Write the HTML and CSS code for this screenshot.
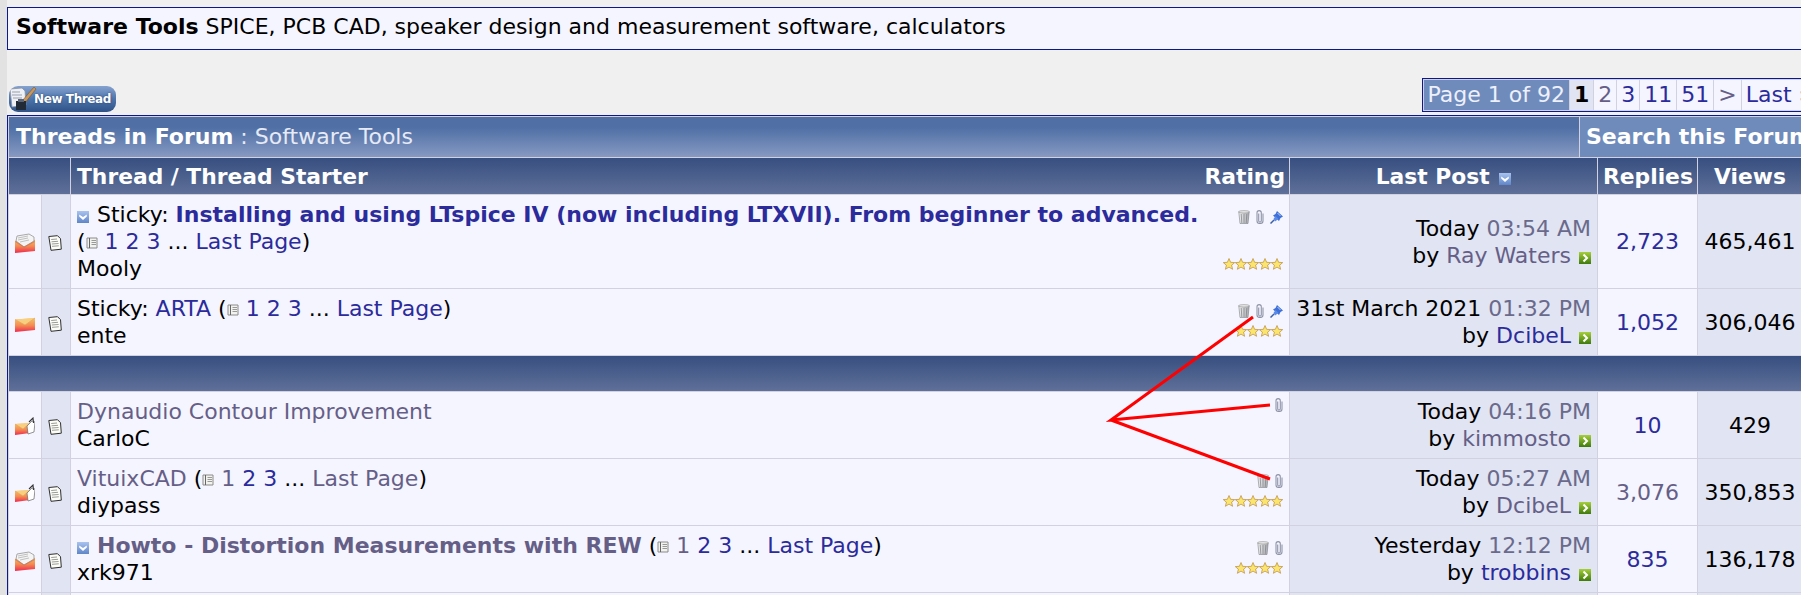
FILE: index.html
```html
<!DOCTYPE html>
<html lang="en">
<head>
<meta charset="utf-8">
<title>Software Tools</title>
<link rel="stylesheet" href="styles.css">
</head>
<body>
<svg class="defs" width="0" height="0" aria-hidden="true">
  <defs>
    <linearGradient id="env" x1="0" y1="0" x2="0" y2="1"><stop offset="0" stop-color="#f4c46a"/><stop offset=".55" stop-color="#f48a50"/><stop offset="1" stop-color="#ee2a50"/></linearGradient>
    <linearGradient id="chk" x1="0" y1="0" x2="0" y2="1"><stop offset="0" stop-color="#a9c3ee"/><stop offset="1" stop-color="#5f86c8"/></linearGradient>
    <linearGradient id="grn" x1="0" y1="0" x2="0" y2="1"><stop offset="0" stop-color="#a6cf3a"/><stop offset="1" stop-color="#3f7a0c"/></linearGradient>
    <linearGradient id="trs" x1="0" y1="0" x2="1" y2="0"><stop offset="0" stop-color="#f2f2f2"/><stop offset="1" stop-color="#a5a8ae"/></linearGradient>
    <symbol id="i-closed" viewBox="0 0 20 20">
      <path d="M0 5.500 20 4v12L0 18z" fill="url(#env)"/>
      <path d="M0 5.500 10 11 20 4" fill="#f7cf7e" stroke="#e2a25e" stroke-width=".6"/>
    </symbol>
    <symbol id="i-new" viewBox="0 0 20 20">
      <path d="M0 7 15 6v10L0 18z" fill="url(#env)"/>
      <path d="M0 7 8 12 15 6" fill="#f7cf7e" stroke="#e2a25e" stroke-width=".6"/>
      <path d="M12 9 17 4 20 5 19 15 13 17z" fill="#fff" stroke="#666" stroke-width=".7"/>
      <path d="M14 5 18 1 18.500 6" fill="none" stroke="#333" stroke-width="1.100"/>
    </symbol>
    <symbol id="i-hot" viewBox="0 0 20 20">
      <path d="M0 8 10 5 20 7v11L0 20z" fill="url(#env)"/>
      <path d="M1 8 2 3 14 1l5 3v4L9 14z" fill="#f4f4f4" stroke="#888" stroke-width=".7"/>
      <path d="M3 5 13 3M3 7l10-2M5 9l9-2" stroke="#aaa" stroke-width=".7"/>
      <path d="M0 8.500 9 14 20 8.500" fill="none" stroke="#d9734a" stroke-width=".7"/>
    </symbol>
    <symbol id="i-doc" viewBox="0 0 14 16">
      <path d="M.8 1.500 9.500.7l3 3 .8 10.500-10.300 1.100z" fill="#fdfdf8" stroke="#2f2f2f" stroke-width="1"/>
      <path d="M3.200 4.500 9 4M3.500 6.800l6.500-.5M3.800 9l6.800-.5M4 11.300l6.800-.5" stroke="#808080" stroke-width=".8"/>
    </symbol>
    <symbol id="i-mini" viewBox="0 0 12 12">
      <path d="M1 1h10v10H1z" fill="#f2f2ee" stroke="#8a8a8a"/>
      <path d="M3.500 1v10" stroke="#666"/>
      <path d="M5.500 3.500H10M5.500 5.500H10M5.500 7.500H10" stroke="#999"/>
    </symbol>
    <symbol id="i-check" viewBox="0 0 12 12">
      <path d="M0 0h12v12H0z" fill="url(#chk)"/>
      <path d="M2.200 3.500 6 6 9.800 3.500 9.800 5.500 6 9 2.200 5.500z" fill="#fff"/>
    </symbol>
    <symbol id="i-go" viewBox="0 0 12 12">
      <path d="M0 0h12v12H0z" fill="url(#grn)"/>
      <path d="M4.500 2.500 8 6l-3.500 3.500" fill="none" stroke="#fff" stroke-width="2"/>
    </symbol>
    <symbol id="i-trash" viewBox="0 0 12 14">
      <path d="M.8 1.800h10.400L10 13.500H2z" fill="url(#trs)" stroke="#7c8085" stroke-width=".6"/>
      <ellipse cx="6" cy="1.800" rx="5.400" ry="1.200" fill="#e8e8e8" stroke="#808080" stroke-width=".5"/>
      <path d="M3.200 4 3.800 13M6 4v9M8.800 4l-.6 9" stroke="#7a7d83" stroke-width=".7"/>
    </symbol>
    <symbol id="i-clip" viewBox="0 0 8 14">
      <path d="M2.700 3.500v7.200a1.300 1.300 0 0 0 2.600 0V2.800A2 2 0 0 0 1 2.800v8.200c0 3.300 6 3.300 6 0V3.500" fill="none" stroke="#8f94a8" stroke-width="1.100"/>
    </symbol>
    <symbol id="i-pin" viewBox="0 0 13 13">
      <path d="M7 0 13 5.500 10.500 7 9 10 3 4.500 5.500 3z" fill="#3f70d8"/>
      <path d="M3.500 8 5.500 5 8.500 8 5 10.500z" fill="#5a8be8"/>
      <path d="M4 9 .5 12.500" stroke="#3a5fa8" stroke-width="1.500"/>
      <path d="M7.500 2 10.500 5" stroke="#b9d0f8"/>
    </symbol>
    <symbol id="i-star" viewBox="0 0 12 12">
      <path d="M6 .5 7.600 4.300 11.700 4.600 8.600 7.200 9.600 11.300 6 9.100 2.400 11.300 3.400 7.200 .3 4.600 4.400 4.300z" fill="#fbe56e" stroke="#b98a3c" stroke-width=".7"/>
    </symbol>
    <symbol id="i-ink" viewBox="0 0 28 26">
      <path d="M1 3 13 2l3 3 1 14-14 2z" fill="#eef0f4" stroke="#8a93a3" stroke-width=".8"/>
      <path d="M3 6h8M3 9h10M4 12h9" stroke="#97a0b0"/>
      <path d="M13 15 25 1l2 2-11 14z" fill="#c8965a" stroke="#6d4a25" stroke-width=".5"/>
      <path d="M7 15h10v9H7z" fill="#222a38"/>
      <path d="M9 13h6v3H9z" fill="#5b6475"/>
    </symbol>
  </defs>
</svg>

<div class="page">
  <div class="forumdesc"><strong>Software Tools</strong> SPICE, PCB CAD, speaker design and measurement software, calculators</div>

  <div class="toolbar">
    <a class="newthread" href="#">
      <svg class="newthread-ink" width="28" height="26"><use href="#i-ink"/></svg>
      <span>New Thread</span>
    </a>
    <nav class="pagenav">
      <span class="pn pn-title">Page 1 of 92</span>
      <span class="pn pn-cur">1</span>
      <a class="pn v" href="#">2</a>
      <a class="pn" href="#">3</a>
      <a class="pn" href="#">11</a>
      <a class="pn" href="#">51</a>
      <a class="pn v" href="#">&gt;</a>
      <a class="pn" href="#">Last <span class="raquo">»</span></a>
    </nav>
  </div>

  <div class="band">
    <div class="band-title"><strong>Threads in Forum</strong> : Software Tools</div>
    <div class="band-search">Search this Forum</div>
  </div>

  <table class="threads">
    <colgroup>
      <col class="c-status"><col class="c-icon"><col class="c-title"><col class="c-last"><col class="c-rep"><col class="c-views">
    </colgroup>
    <thead>
      <tr>
        <th colspan="2"></th>
        <th class="th-thread"><span>Thread / Thread Starter</span><span>Rating</span></th>
        <th>Last Post <svg class="ic12 sort" width="12" height="12"><use href="#i-check"/></svg></th>
        <th>Replies</th>
        <th>Views</th>
      </tr>
    </thead>
    <tbody>
      <tr>
        <td class="alt ctr"><svg class="st" width="20" height="20"><use href="#i-hot"/></svg></td>
        <td class="alt2 ctr"><svg class="dc" width="14" height="16"><use href="#i-doc"/></svg></td>
        <td class="cell-t"><div class="tw">
          <div class="tm"><svg class="ic12 lead" width="12" height="12"><use href="#i-check"/></svg>Sticky: <a class="b" href="#">Installing and using LTspice IV (now including LTXVII). From beginner to advanced.</a><br>(<svg class="ic12 mini" width="12" height="12"><use href="#i-mini"/></svg> <a href="#">1</a> <a href="#">2</a> <a href="#">3</a> ... <a href="#">Last Page</a>)<br>Mooly</div>
          <div class="sd"><div class="ics"><svg width="12" height="14"><use href="#i-trash"/></svg><svg width="8" height="14"><use href="#i-clip"/></svg><svg width="13" height="13"><use href="#i-pin"/></svg></div><div class="stars"><svg width="12" height="12"><use href="#i-star"/></svg><svg width="12" height="12"><use href="#i-star"/></svg><svg width="12" height="12"><use href="#i-star"/></svg><svg width="12" height="12"><use href="#i-star"/></svg><svg width="12" height="12"><use href="#i-star"/></svg></div></div>
        </div></td>
        <td class="alt2 last">Today <span class="time">03:54 AM</span><br>by <a class="v" href="#">Ray Waters</a> <svg class="ic12 go" width="12" height="12"><use href="#i-go"/></svg></td>
        <td class="ctr"><a href="#">2,723</a></td>
        <td class="alt2 ctr">465,461</td>
      </tr>
      <tr>
        <td class="alt ctr"><svg class="st" width="20" height="20"><use href="#i-closed"/></svg></td>
        <td class="alt2 ctr"><svg class="dc" width="14" height="16"><use href="#i-doc"/></svg></td>
        <td class="cell-t"><div class="tw">
          <div class="tm">Sticky: <a href="#">ARTA</a> (<svg class="ic12 mini" width="12" height="12"><use href="#i-mini"/></svg> <a href="#">1</a> <a href="#">2</a> <a href="#">3</a> ... <a href="#">Last Page</a>)<br>ente</div>
          <div class="sd"><div class="ics"><svg width="12" height="14"><use href="#i-trash"/></svg><svg width="8" height="14"><use href="#i-clip"/></svg><svg width="13" height="13"><use href="#i-pin"/></svg></div><div class="stars"><svg width="12" height="12"><use href="#i-star"/></svg><svg width="12" height="12"><use href="#i-star"/></svg><svg width="12" height="12"><use href="#i-star"/></svg><svg width="12" height="12"><use href="#i-star"/></svg></div></div>
        </div></td>
        <td class="alt2 last">31st March 2021 <span class="time">01:32 PM</span><br>by <a href="#">DcibeL</a> <svg class="ic12 go" width="12" height="12"><use href="#i-go"/></svg></td>
        <td class="ctr"><a href="#">1,052</a></td>
        <td class="alt2 ctr">306,046</td>
      </tr>
      <tr><td class="sep" colspan="6"></td></tr>
      <tr>
        <td class="alt ctr"><svg class="st" width="20" height="20"><use href="#i-new"/></svg></td>
        <td class="alt2 ctr"><svg class="dc" width="14" height="16"><use href="#i-doc"/></svg></td>
        <td class="cell-t"><div class="tw">
          <div class="tm"><a class="v" href="#">Dynaudio Contour Improvement</a><br>CarloC</div>
          <div class="sd sd-plain"><div class="ics"><svg width="8" height="14"><use href="#i-clip"/></svg></div></div>
        </div></td>
        <td class="alt2 last">Today <span class="time">04:16 PM</span><br>by <a class="v" href="#">kimmosto</a> <svg class="ic12 go" width="12" height="12"><use href="#i-go"/></svg></td>
        <td class="ctr"><a href="#">10</a></td>
        <td class="alt2 ctr">429</td>
      </tr>
      <tr>
        <td class="alt ctr"><svg class="st" width="20" height="20"><use href="#i-new"/></svg></td>
        <td class="alt2 ctr"><svg class="dc" width="14" height="16"><use href="#i-doc"/></svg></td>
        <td class="cell-t"><div class="tw">
          <div class="tm"><a class="v" href="#">VituixCAD</a> (<svg class="ic12 mini" width="12" height="12"><use href="#i-mini"/></svg> <a class="v" href="#">1</a> <a href="#">2</a> <a href="#">3</a> ... <a class="v" href="#">Last Page</a>)<br>diypass</div>
          <div class="sd"><div class="ics"><svg width="12" height="14"><use href="#i-trash"/></svg><svg width="8" height="14"><use href="#i-clip"/></svg></div><div class="stars"><svg width="12" height="12"><use href="#i-star"/></svg><svg width="12" height="12"><use href="#i-star"/></svg><svg width="12" height="12"><use href="#i-star"/></svg><svg width="12" height="12"><use href="#i-star"/></svg><svg width="12" height="12"><use href="#i-star"/></svg></div></div>
        </div></td>
        <td class="alt2 last">Today <span class="time">05:27 AM</span><br>by <a class="v" href="#">DcibeL</a> <svg class="ic12 go" width="12" height="12"><use href="#i-go"/></svg></td>
        <td class="ctr"><a class="v" href="#">3,076</a></td>
        <td class="alt2 ctr">350,853</td>
      </tr>
      <tr>
        <td class="alt ctr"><svg class="st" width="20" height="20"><use href="#i-hot"/></svg></td>
        <td class="alt2 ctr"><svg class="dc" width="14" height="16"><use href="#i-doc"/></svg></td>
        <td class="cell-t"><div class="tw">
          <div class="tm"><svg class="ic12 lead" width="12" height="12"><use href="#i-check"/></svg><a class="b v" href="#">Howto - Distortion Measurements with REW</a> (<svg class="ic12 mini" width="12" height="12"><use href="#i-mini"/></svg> <a class="v" href="#">1</a> <a href="#">2</a> <a href="#">3</a> ... <a href="#">Last Page</a>)<br>xrk971</div>
          <div class="sd"><div class="ics"><svg width="12" height="14"><use href="#i-trash"/></svg><svg width="8" height="14"><use href="#i-clip"/></svg></div><div class="stars"><svg width="12" height="12"><use href="#i-star"/></svg><svg width="12" height="12"><use href="#i-star"/></svg><svg width="12" height="12"><use href="#i-star"/></svg><svg width="12" height="12"><use href="#i-star"/></svg></div></div>
        </div></td>
        <td class="alt2 last">Yesterday <span class="time">12:12 PM</span><br>by <a href="#">trobbins</a> <svg class="ic12 go" width="12" height="12"><use href="#i-go"/></svg></td>
        <td class="ctr"><a href="#">835</a></td>
        <td class="alt2 ctr">136,178</td>
      </tr>
      <tr>
        <td class="alt">&nbsp;</td><td class="alt2"></td><td></td><td class="alt2"></td><td></td><td class="alt2"></td>
      </tr>
    </tbody>
  </table>
</div>

<svg class="annot" width="1801" height="595" aria-hidden="true">
  <path d="M1253 317 1111 420 1270 405M1111 420 1270 479" fill="none" stroke="#ff0000" stroke-width="3"/>
</svg>
</body>
</html>
```

FILE: styles.css
```css
html, body {
  height: 595px;
  overflow: hidden;
}
body {
  margin: 0;
  background: #e2e2e2;
  font-family: "DejaVu Sans", sans-serif;
  font-size: 22px;
  line-height: 27px;
  color: #000;
  position: relative;
}
.defs { position: absolute; }
a { color: #2b2b9c; text-decoration: none; }
a.v { color: #655f87; }
a.b { font-weight: bold; }
.time { color: #6a6a8c; }

.page {
  margin-left: 7px;
  width: 1811px;
  padding-top: 7px;
  background: #f0f0f0;
}

.forumdesc {
  box-sizing: border-box;
  height: 43px;
  line-height: 37px;
  padding: 0 8px;
  background: #f5f5ff;
  border: 1px solid #0b198c;
  white-space: nowrap;
}

.toolbar {
  height: 65px;
  display: flex;
  justify-content: space-between;
  align-items: flex-end;
  padding-bottom: 3px;
  box-sizing: border-box;
}
.newthread {
  margin-left: 2px;
  width: 107px;
  height: 26px;
  box-sizing: border-box;
  border-radius: 9px;
  background: linear-gradient(#86a3cf, #4d74ac 50%, #2f5387);
  display: flex;
  align-items: center;
  color: #fff;
  font-size: 12px;
  font-weight: bold;
  line-height: 26px;
  letter-spacing: -.4px;
  white-space: nowrap;
  overflow: hidden;
  text-shadow: 0 0 2px #26406c;
}
.newthread-ink { flex: none; margin-right: -3px; }

.pagenav {
  display: flex;
  gap: 1px;
  padding: 1px;
  height: 30px;
  background: #d1d1e1;
  border: 1px solid #0b198c;
  white-space: nowrap;
  line-height: 29px;
}
.pn { background: #f5f5ff; padding: 0 4px; }
.pn-title { background: #6f8bbb; color: #eef0fb; }
.pn-cur { background: #e1e4f2; font-weight: bold; color: #000; }
.raquo { color: #e8a0a0; }

.band {
  display: flex;
  height: 43px;
  box-sizing: border-box;
  border: 1px solid #0b198c;
  padding: 1px 1px 0 1px;
  background: #d1d1e1;
  gap: 1px;
  width: 100%;
}
.band-title {
  flex: 0 0 1570px;
  box-sizing: border-box;
  padding-left: 7px;
  line-height: 39px;
  color: #e6eaf6;
  background: linear-gradient(#4f6fa5 25%, #8699c2);
}
.band-title strong { color: #fff; }
.band-search {
  flex: 1;
  padding-left: 6px;
  line-height: 39px;
  background: #6f8bbb;
  color: #fff;
  font-weight: bold;
  white-space: nowrap;
}

.threads {
  table-layout: fixed;
  width: 1796px;
  border-collapse: separate;
  border-spacing: 1px;
  background: #d1d1e1;
  border-left: 1px solid #0b198c;
  margin-top: -1px;
}
.c-status { width: 32px; }
.c-icon { width: 28px; }
.c-title { width: 1218px; }
.c-last { width: 307px; }
.c-rep { width: 99px; }
.c-views { width: 104px; }

.threads th {
  height: 36px;
  padding: 0 5px;
  background: linear-gradient(#374f80, #5f7099);
  color: #fff;
  font-size: 21.800px;
  font-weight: bold;
  white-space: nowrap;
  text-align: center;
  box-sizing: border-box;
}
.threads th.th-thread { text-align: left; padding: 0 4px 0 6px; }
.threads th.th-thread span:last-child { float: right; }
.threads th.th-thread span:first-child { float: left; }
.threads td {
  background: #f5f5ff;
  padding: 6px;
  white-space: nowrap;
  vertical-align: middle;
}
.threads td.alt { background: #f5f5ff; padding: 0; }
.threads td.alt2 { background: #e1e4f2; }
.threads td.ctr { text-align: center; padding-left: 0; padding-right: 0; }
.threads td.last { text-align: right; padding-right: 6px; }
.threads td.sep {
  height: 35px;
  padding: 0;
  background: linear-gradient(#374f80, #5f7099);
}
.threads td.cell-t { padding: 6px; }

.tw { display: flex; justify-content: space-between; min-height: 54px; }
.tm { flex: 1; min-width: 0; }
.sd {
  display: flex;
  flex-direction: column;
  justify-content: space-between;
  align-items: flex-end;
  padding: 9px 0 12px;
  flex: none;
}
.sd-plain { padding: 0; }
.ics { display: flex; gap: 6px; align-items: center; height: 14px; }
.stars { display: flex; height: 12px; }
svg { display: block; }
.ic12, .st, .dc { display: inline-block; vertical-align: middle; }
.dc { margin-right: 2px; }
.lead { margin: 0 8px 0 0; position: relative; top: 1px; }
.mini { margin: 0; }
.sort { margin-left: 2px; position: relative; top: 1px; }
.go { margin-left: 1px; position: relative; top: 1px; }
.ics svg, .stars svg { flex: none; }

.annot {
  position: absolute;
  left: 0;
  top: 0;
  pointer-events: none;
}
```
